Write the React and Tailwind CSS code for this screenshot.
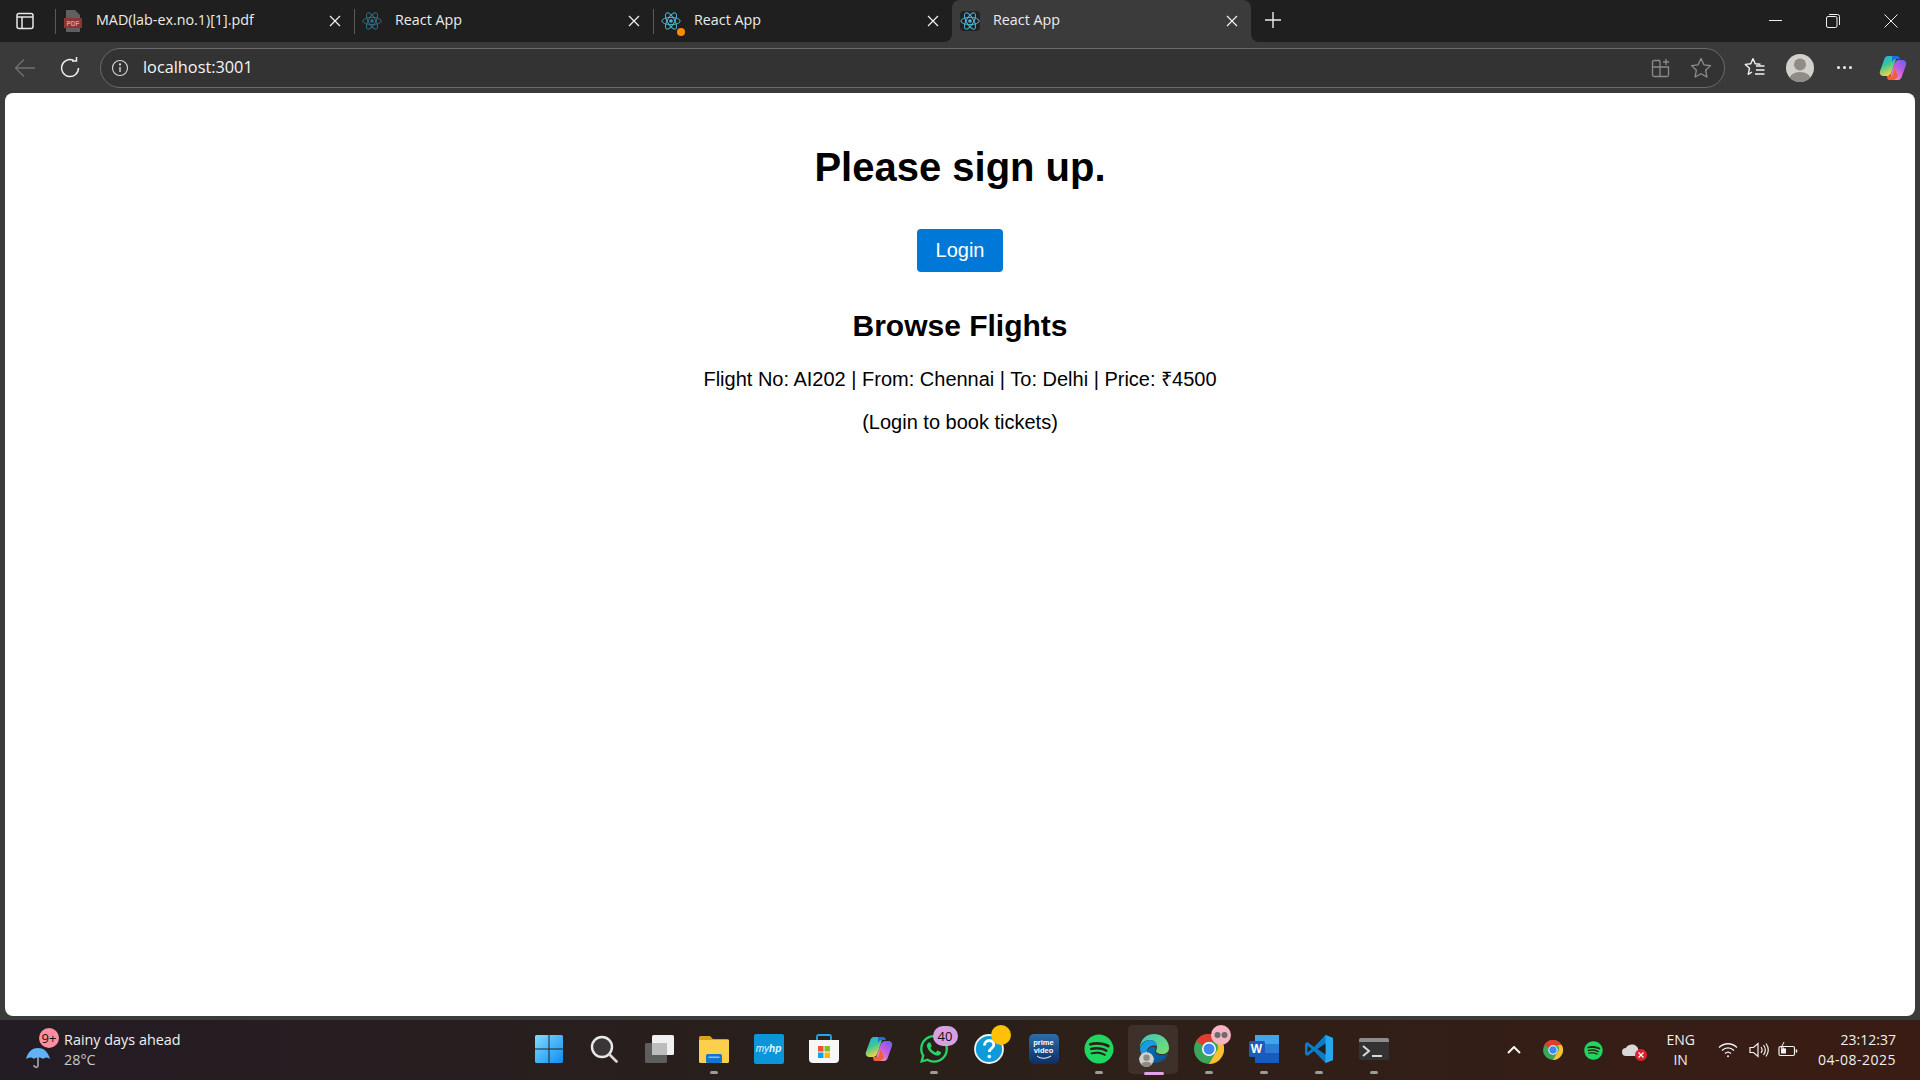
import React from "react";
import { FaWhatsapp, FaSpotify } from "react-icons/fa";

const ui = "font-['Open_Sans','Noto_Sans',sans-serif]";

const ReactLogo = ({ dim }) => (
  <svg width="20" height="20" viewBox="-12 -12 24 24" fill="none" stroke={dim ? "#2f6f80" : "#4fb6d6"} strokeWidth="1.2" className="shrink-0">
    <circle r="2.2" fill={dim ? "#2f6f80" : "#4fb6d6"} stroke="none" />
    <ellipse rx="11" ry="4.4" />
    <ellipse rx="11" ry="4.4" transform="rotate(60)" />
    <ellipse rx="11" ry="4.4" transform="rotate(120)" />
  </svg>
);

const CloseX = () => (
  <svg width="12" height="12" viewBox="0 0 12 12" stroke="#f2f2f2" strokeWidth="1.2" className="shrink-0">
    <path d="M1 1l10 10M11 1L1 11" />
  </svg>
);

const PdfIcon = () => (
  <svg width="20" height="22" viewBox="0 0 20 22" className="shrink-0">
    <path d="M3 0h9l5 5v17H3z" fill="#5f5f5f" />
    <rect x="1" y="8" width="18" height="10" fill="#8e3434" />
    <text x="10" y="15.500" textAnchor="middle" fontSize="6.500" fontFamily="Liberation Sans" fontWeight="700" fill="#d79a9a">PDF</text>
  </svg>
);

function Tab({ icon, title, active, dot, divider }) {
  return (
    <div className={`relative flex h-[42px] w-[299px] shrink-0 items-center ${active ? "rounded-t-lg bg-[#3b3b3b] pl-[8px]" : "pl-[8px]"}`}>
      {divider && <div className="absolute left-0 top-[9px] h-[25px] w-px bg-[#5a5a5a]" />}
      {active && (
        <>
          <div className="absolute bottom-0 left-[-8px] h-[8px] w-[8px] bg-[#3b3b3b]"><div className="h-full w-full rounded-br-lg bg-[#1f1f1f]" /></div>
          <div className="absolute bottom-0 right-[-8px] h-[8px] w-[8px] bg-[#3b3b3b]"><div className="h-full w-full rounded-bl-lg bg-[#1f1f1f]" /></div>
        </>
      )}
      <div className={`relative flex h-[20px] w-[20px] shrink-0 items-center justify-center ${active ? "rounded-sm bg-[#222]" : ""}`}>
        {icon}
        {dot && <span className="absolute bottom-[-5px] right-[-4px] h-[8px] w-[8px] rounded-full bg-[#ff8c00]" />}
      </div>
      <span className={`ml-[13px] flex-1 pb-[3px] text-[14.3px] text-[#ececec] ${ui}`}>{title}</span>
      <span className="mr-[13px]"><CloseX /></span>
    </div>
  );
}

const Collections = ({ c = "#8a8a8a" }) => (
  <svg width="20" height="20" viewBox="0 0 20 20" fill="none" stroke={c} strokeWidth="1.3">
    <path d="M9 2.5H3a1.5 1.5 0 0 0-1.5 1.5v13A1.5 1.5 0 0 0 3 18.5h13a1.5 1.5 0 0 0 1.5-1.5V9H1.5M9 2.5v16" />
    <path d="M15 1v6M12 4h6" />
  </svg>
);

const Star = ({ c = "#8f8f8f" }) => (
  <svg width="22" height="22" viewBox="0 0 22 22" fill="none" stroke={c} strokeWidth="1.3" strokeLinejoin="round">
    <path d="M11 1.5l2.9 6.3 6.6.8-4.9 4.6 1.3 6.8L11 16.7l-5.9 3.3 1.3-6.8L1.500 8.600l6.600-.8z" />
  </svg>
);

const Favs = () => (
  <svg width="22" height="22" viewBox="0 0 22 22" fill="none" stroke="#f2f2f2" strokeWidth="1.4" strokeLinejoin="round">
    <path d="M9 1.5l2.200 5.300 5.300.5M9 1.500L6.800 6.800l-5.500.6 4.200 3.900-1.300 6 3.800-2.300" />
    <path d="M12 9h8.500M12 13h8.500M11 17h9.500" />
  </svg>
);

const CopilotMark = ({ size }) => (
  <svg width={size} height={size} viewBox="0 0 28 28">
    <defs>
      <linearGradient id="cpA" x1="0" y1="0" x2="0.4" y2="1">
        <stop offset="0" stopColor="#2aa8f0" />
        <stop offset="0.5" stopColor="#38c79a" />
        <stop offset="1" stopColor="#f5d33c" />
      </linearGradient>
      <linearGradient id="cpB" x1="1" y1="0" x2="0.2" y2="1">
        <stop offset="0" stopColor="#6a5cf0" />
        <stop offset="0.5" stopColor="#c45ce0" />
        <stop offset="1" stopColor="#f0a0c8" />
      </linearGradient>
    </defs>
    <path d="M9 2h9l-5 15c-1 3-2.500 5-5 5H5c-3 0-5-2-4-5l4-11c.7-2.500 2-4 4-4z" fill="url(#cpA)" />
    <path d="M19 26h-9l5-15c1-3 2.500-5 5-5h3c3 0 5 2 4 5l-4 11c-.7 2.500-2 4-4 4z" fill="url(#cpB)" />
    <path d="M8 22h5l3-8 3 8c-1.500 3-3 4-5 4h-4c-1.500 0-2-2-2-4z" fill="#f0603c" />
    <path d="M13 2h5c1.500 0 2.500 1 3 3h-4c-2 0-3 1-4 3z" fill="#1f6fe0" />
  </svg>
);

const Avatar = ({ size }) => (
  <svg width={size} height={size} viewBox="0 0 28 28">
    <defs><clipPath id={`av${size}`}><circle cx="14" cy="14" r="14" /></clipPath></defs>
    <g clipPath={`url(#av${size})`}>
      <rect width="28" height="28" fill="#d2d0cb" />
      <circle cx="14" cy="10.500" r="6" fill="#8f8b86" />
      <ellipse cx="14" cy="26" rx="11" ry="8" fill="#8f8b86" />
    </g>
  </svg>
);

const Win = () => (
  <svg width="30" height="30" viewBox="0 0 30 30">
    <defs>
      <linearGradient id="wn" x1="0" y1="0" x2="1" y2="1">
        <stop offset="0" stopColor="#7fdcff" />
        <stop offset="1" stopColor="#0f8cf0" />
      </linearGradient>
    </defs>
    <path d="M1 2.500A1.500 1.500 0 0 1 2.500 1H14.500V14.500H1zM15.500 1H27.500A1.500 1.500 0 0 1 29 2.500V14.500H15.500zM1 15.500H14.500V29H2.500A1.500 1.500 0 0 1 1 27.500zM15.500 15.500H29V27.500A1.500 1.500 0 0 1 27.500 29H15.500z" fill="url(#wn)" />
  </svg>
);

const Search = () => (
  <svg width="28" height="28" viewBox="0 0 28 28" fill="none">
    <circle cx="12" cy="12" r="10" fill="#3a3536" stroke="#e8e8e8" strokeWidth="2.400" />
    <path d="M19.500 19.500l7 7" stroke="#d8d8d8" strokeWidth="2.600" strokeLinecap="round" />
  </svg>
);

const TaskView = () => (
  <svg width="30" height="30" viewBox="0 0 30 30">
    <rect x="1" y="9" width="22" height="20" rx="1.500" fill="#5e5e5e" />
    <rect x="8" y="1" width="22" height="20" rx="1.500" fill="#f0f0f0" />
    <rect x="8" y="9" width="15" height="12" fill="#bdbdbd" />
  </svg>
);

const Folder = () => (
  <svg width="30" height="28" viewBox="0 0 30 28">
    <path d="M0 2.500A1.500 1.500 0 0 1 1.500 1H11l3 3h14.500A1.500 1.500 0 0 1 30 5.500V12H0z" fill="#d9a21b" />
    <path d="M0 5h30v21.500a1.500 1.500 0 0 1-1.500 1.500H1.500A1.500 1.500 0 0 1 0 26.500z" fill="#fbd04c" />
    <rect x="7" y="19" width="16" height="9" rx="1.500" fill="#1474d4" />
    <rect x="9.500" y="21.500" width="11" height="1.500" fill="#7cc0f5" />
  </svg>
);

const MyHp = () => (
  <div className="flex h-[30px] w-[30px] items-center justify-center rounded-[2px] bg-[#0a96d8]">
    <span className="font-['Liberation_Sans',sans-serif] text-[10px] italic leading-none text-[#e8f6fd]">my<b>hp</b></span>
  </div>
);

const Store = () => (
  <svg width="30" height="30" viewBox="0 0 30 30">
    <path d="M8 6V2.500A1.500 1.500 0 0 1 9.500 1h11A1.500 1.500 0 0 1 22 2.500V6" fill="none" stroke="#22a6e8" strokeWidth="1.800" />
    <path d="M0 6h30v19a4 4 0 0 1-4 4H4a4 4 0 0 1-4-4z" fill="#f7f7f7" />
    <rect x="9" y="12" width="5.500" height="5.500" fill="#f05030" />
    <rect x="15.500" y="12" width="5.500" height="5.500" fill="#80c020" />
    <rect x="9" y="18.500" width="5.500" height="5.500" fill="#10a0f0" />
    <rect x="15.500" y="18.500" width="5.500" height="5.500" fill="#ffb800" />
  </svg>
);

const Help = () => (
  <svg width="30" height="30" viewBox="0 0 30 30">
    <circle cx="15" cy="15" r="14" fill="#0d9bdc" stroke="#f2f2f2" strokeWidth="1.800" />
    <path d="M10.500 11.500c0-3 2-5 4.700-5s4.600 1.800 4.600 4.200c0 3.600-4.500 3.600-4.500 7.300" fill="none" stroke="#fff" strokeWidth="2.800" />
    <circle cx="15.300" cy="22.500" r="1.800" fill="#fff" />
  </svg>
);

const Prime = () => (
  <div className="flex h-[30px] w-[30px] flex-col items-center justify-center rounded-[5px] bg-gradient-to-b from-[#2e6da8] to-[#0e2e66]">
    <span className="font-['Liberation_Sans',sans-serif] text-[7.500px] font-bold leading-[8px] text-white">prime</span>
    <span className="font-['Liberation_Sans',sans-serif] text-[7.500px] font-bold leading-[8px] text-white">video</span>
    <svg width="16" height="5" viewBox="0 0 16 5" fill="none" stroke="#fff" strokeWidth="1"><path d="M1 1c4 3 9 3 14 0" /></svg>
  </div>
);

const Edge = () => (
  <svg width="30" height="30" viewBox="0 0 30 30">
    <defs>
      <linearGradient id="edA" x1="0" y1="0" x2="1" y2="1">
        <stop offset="0" stopColor="#3bc4c0" />
        <stop offset="1" stopColor="#7be06a" />
      </linearGradient>
      <linearGradient id="edB" x1="0" y1="0" x2="1" y2="1">
        <stop offset="0" stopColor="#0f6cb8" />
        <stop offset="1" stopColor="#0a4f8f" />
      </linearGradient>
    </defs>
    <path d="M1 14C1 6 7 0 15 0c8 0 15 6 15 14 0 4-3 6-7 6-3 0-6-1-6-3 0-1 1-2 1-4 0-4-3-7-7-7C6 6 2 9 1 14z" fill="url(#edA)" />
    <path d="M1 14c2-5 6-8 10-8 4 0 7 3 7 6-2-1-9-1-10 5-1 5 2 10 6 12C7 28 1 22 1 14z" fill="#1a9be0" />
    <path d="M14 29c-4-2-7-6-6-11 .5-3 3-5 6-5 1 0 2 .5 3 1-1 1-1 2-1 3 0 3 4 5 8 4 2 0 4-1 5-2-1 6-7 10-15 10z" fill="url(#edB)" />
  </svg>
);

const Chrome = ({ size = 30 }) => (
  <svg width={size} height={size} viewBox="0 0 30 30">
    <circle cx="15" cy="15" r="15" fill="#3ba55c" />
    <path d="M15 0a15 15 0 0 1 13 7.500H15a7.500 7.500 0 0 0-6.500 3.750L2 7A15 15 0 0 1 15 0z" fill="#e33b2e" />
    <path d="M28 7.500A15 15 0 0 1 15 30l6.500-11.250a7.500 7.500 0 0 0 0-11.250z" fill="#fbc02d" />
    <circle cx="15" cy="15" r="7" fill="#fff" />
    <circle cx="15" cy="15" r="5.500" fill="#3f86f4" />
  </svg>
);

const Word = () => (
  <svg width="30" height="30" viewBox="0 0 30 30">
    <rect x="6" y="1" width="24" height="9" fill="#41a5ee" />
    <rect x="6" y="10" width="24" height="9" fill="#2b7cd3" />
    <rect x="6" y="19" width="24" height="10" fill="#185abd" />
    <rect x="0" y="7" width="16" height="16" rx="1.500" fill="#1b5bbd" />
  </svg>
);

const VsCode = () => (
  <svg width="30" height="30" viewBox="0 0 30 30">
    <path d="M21.500 1L10 13 3.500 8 1 9.500v11L3.500 22 10 17l11.500 12 7.500-3V4z" fill="#0a7cc8" />
    <path d="M21.500 1L29 4v22l-7.500 3z" fill="#25a8ee" />
    <path d="M21.500 9.500L13.500 15l8 5.500z" fill="#241f1a" />
    <path d="M3.500 11.500L7.500 15l-4 3.500z" fill="#241f1a" />
  </svg>
);

const Terminal = () => (
  <div className="relative h-[22px] w-[30px] overflow-hidden rounded-[2px] bg-[#333]">
    <div className="h-[4px] bg-[#8c8c8c]" />
    <svg width="30" height="18" viewBox="0 0 30 18" fill="none" stroke="#d8d8d8" strokeWidth="2">
      <path d="M4 4l6 5-6 5" />
      <path d="M13 14h10" />
    </svg>
  </div>
);

const Badge = ({ className, children }) => (
  <span className={`absolute flex items-center justify-center rounded-full text-[13px] leading-none text-[#111] ${ui} ${className}`}>{children}</span>
);

function Cell({ children, mark, active }) {
  return (
    <div className="relative flex h-[60px] w-[55px] items-center justify-center pb-[2px]">
      {active && <div className="absolute left-[2px] top-[5px] h-[49px] w-[50px] rounded-[5px] bg-[#ffffff14]" />}
      <div className="relative flex items-center justify-center">{children}</div>
      {mark && <div className="absolute bottom-[6px] left-1/2 h-[3px] w-[8px] -translate-x-1/2 rounded-full bg-[#9c9c9c]" />}
      {active && <div className="absolute bottom-[5px] left-1/2 h-[3px] w-[20px] -translate-x-1/2 rounded-full bg-[#e2a4e8]" />}
    </div>
  );
}

export default function App() {
  return (
    <div className="flex h-[1080px] w-[1920px] flex-col overflow-hidden bg-[#3b3b3b]">
      {/* tab strip */}
      <div className="flex h-[42px] shrink-0 items-center bg-[#1f1f1f]">
        <div className="flex w-[55px] shrink-0 justify-center pr-[5px]">
          <svg width="18" height="18" viewBox="0 0 18 18" fill="none" stroke="#e8e8e8" strokeWidth="1.500">
            <rect x="1" y="1.500" width="16" height="15" rx="2" />
            <path d="M1 5h16M6 5v11" />
          </svg>
        </div>
        <Tab divider icon={<PdfIcon />} title="MAD(lab-ex.no.1)[1].pdf" />
        <Tab divider icon={<ReactLogo dim />} title="React App" />
        <Tab divider dot icon={<ReactLogo />} title="React App" />
        <Tab active icon={<ReactLogo />} title="React App" />
        <div className="ml-[14px] flex pb-[3px]">
          <svg width="16" height="16" viewBox="0 0 16 16" stroke="#ededed" strokeWidth="1.400"><path d="M8 0v16M0 8h16" /></svg>
        </div>
        <div className="ml-auto flex items-center">
          <div className="flex w-[58px] justify-center"><div className="mb-[2px] h-px w-[13px] bg-[#f0f0f0]" /></div>
          <div className="flex w-[58px] justify-center">
            <svg width="14" height="14" viewBox="0 0 14 14" fill="none" stroke="#f0f0f0" strokeWidth="1"><rect x=".5" y="2.500" width="10.500" height="11" rx="1.500" /><path d="M3 .5h8.500a2 2 0 0 1 2 2V11" /></svg>
          </div>
          <div className="flex w-[58px] justify-center">
            <svg width="14" height="14" viewBox="0 0 14 14" stroke="#f0f0f0" strokeWidth="1"><path d="M.5.5l13 13M13.500.5l-13 13" /></svg>
          </div>
        </div>
      </div>

      {/* toolbar */}
      <div className="flex h-[51px] shrink-0 items-center bg-[#3a3a3a]">
        <div className="flex w-[50px] shrink-0 justify-center">
          <svg width="22" height="20" viewBox="0 0 22 20" fill="none" stroke="#707070" strokeWidth="1.300"><path d="M21 10H1.500M10 1.500L1.500 10l8.500 8.500" /></svg>
        </div>
        <div className="flex w-[40px] shrink-0 justify-center">
          <svg width="22" height="22" viewBox="0 0 22 22" fill="none" stroke="#efefef" strokeWidth="1.500"><path d="M19.500 11A8.500 8.500 0 1 1 14.500 3.300" /><path d="M14.500 0v4.500h-4.500" transform="translate(3 -.5)" /></svg>
        </div>
        <div className="ml-[10px] flex h-[40px] w-[1625px] shrink-0 items-center rounded-full border border-[#6a6a6a] bg-[#333333] pl-[10px]">
          <svg width="18" height="18" viewBox="0 0 18 18" fill="none" stroke="#d8d8d8" strokeWidth="1.100"><circle cx="9" cy="9" r="7.500" /><path d="M9 8v5" strokeWidth="1.400" /><circle cx="9" cy="5.500" r=".6" fill="#d8d8d8" /></svg>
          <span className={`ml-[14px] flex-1 pb-px text-[16.300px] text-[#f5f5f5] ${ui}`}>localhost:3001</span>
          <Collections />
          <div className="ml-[19px] mr-[12px]"><Star /></div>
        </div>
        <div className="ml-[19px] flex w-[22px] shrink-0 justify-center"><Favs /></div>
        <div className="ml-[20px] flex shrink-0"><Avatar size={28} /></div>
        <div className="ml-[18px] flex w-[24px] shrink-0 justify-center gap-[3px]">
          <span className="h-[3px] w-[3px] rounded-full bg-[#eee]" />
          <span className="h-[3px] w-[3px] rounded-full bg-[#eee]" />
          <span className="h-[3px] w-[3px] rounded-full bg-[#eee]" />
        </div>
        <div className="ml-[23px] flex shrink-0"><CopilotMark size={28} /></div>
      </div>

      {/* page */}
      <div className="mx-[5px] flex h-[923px] shrink-0 flex-col items-center rounded-lg bg-white pt-[51px] font-['Liberation_Sans',Arial,sans-serif] text-black">
        <h1 className="text-[40px] font-bold leading-[46px]">Please sign up.</h1>
        <button className="mt-[39px] h-[43px] w-[86px] rounded-[4px] bg-[#0078d7] pb-[2px] text-[20px] text-white">Login</button>
        <h2 className="mt-[37px] text-[30px] font-bold leading-[34px]">Browse Flights</h2>
        <p className="mt-[25px] text-[20px] leading-[23px]">Flight No: AI202 | From: Chennai | To: Delhi | Price: ₹4500</p>
        <p className="mt-[20px] text-[20px] leading-[23px]">(Login to book tickets)</p>
      </div>

      {/* taskbar */}
      <div className="mt-[4px] grid h-[60px] shrink-0 grid-cols-[1fr_auto_1fr] bg-gradient-to-r from-[#241c24] via-[#2a2019] to-[#3a1c14]">
        <div className="flex items-center pl-[26px]">
          <div className="relative flex w-[38px] shrink-0 pt-[14px]">
            <svg width="24" height="24" viewBox="0 0 24 24">
              <path d="M0 14C2 6 7 3 12 3s10 3 12 11c-3-2-5-2-7 0-2-2-7-2-9 0-2-2-5-2-8 0z" fill="#62b2f5" />
              <path d="M12 12v8c0 3-4 3-4 0" fill="none" stroke="#9a9a9a" strokeWidth="1.800" />
            </svg>
            <Badge className="left-[13px] top-[-3px] h-[20px] w-[20px] bg-[#ff8f9f]">9+</Badge>
          </div>
          <div className={`flex flex-col text-[14.400px] leading-[20px] ${ui}`}>
            <span className="text-[#f0f0f0]">Rainy days ahead</span>
            <span className="text-[#c8c8c8]">28°C</span>
          </div>
        </div>

        <div className="ml-[2px] flex">
          <Cell><Win /></Cell>
          <Cell><Search /></Cell>
          <Cell><TaskView /></Cell>
          <Cell mark><Folder /></Cell>
          <Cell><MyHp /></Cell>
          <Cell><Store /></Cell>
          <Cell><CopilotMark size={28} /></Cell>
          <Cell mark>
            <FaWhatsapp size={32} color="#25d366" />
            <Badge className="right-[-8px] top-[-7px] h-[20px] w-[25px] bg-[#d8a0e4]">40</Badge>
          </Cell>
          <Cell>
            <Help />
            <span className="absolute right-[-7px] top-[-9px] h-[20px] w-[20px] rounded-full bg-[#ffc107]" />
          </Cell>
          <Cell><Prime /></Cell>
          <Cell mark><FaSpotify size={30} color="#1ed760" /></Cell>
          <Cell active>
            <Edge />
            <span className="absolute bottom-[-3px] left-0 flex overflow-hidden rounded-full"><Avatar size={15} /></span>
          </Cell>
          <Cell mark>
            <Chrome />
            <Badge className="right-[-7px] top-[-9px] h-[20px] w-[20px] bg-[#f4b4c4]">
              <svg width="14" height="8" viewBox="0 0 14 8" fill="#6b6b6b"><circle cx="3.500" cy="4" r="3" /><circle cx="10.500" cy="4" r="3" /></svg>
            </Badge>
          </Cell>
          <Cell mark>
            <Word />
            <span className="absolute left-0 top-[7px] flex h-[16px] w-[16px] items-center justify-center font-['Liberation_Sans',sans-serif] text-[12px] font-bold text-white">W</span>
          </Cell>
          <Cell mark><VsCode /></Cell>
          <Cell mark><Terminal /></Cell>
        </div>

        <div className={`flex items-center justify-end pr-[24px] text-[14px] leading-[20px] text-[#f0f0f0] ${ui}`}>
          <svg width="14" height="8" viewBox="0 0 14 8" fill="none" stroke="#f4f4f4" strokeWidth="2" className="mr-[22px]"><path d="M1 7l6-6 6 6" /></svg>
          <div className="mr-[21px] flex"><Chrome size={20} /></div>
          <div className="mr-[19px] flex"><FaSpotify size={19} color="#1ed760" /></div>
          <div className="relative mr-[26px] flex">
            <svg width="18" height="12" viewBox="0 0 18 12"><path d="M4 12a4 4 0 0 1 0-8c1-3 7-5 10-2 3 1 4 10 0 10z" fill="#d8d8d8" /></svg>
            <span className="absolute bottom-[-5px] right-[-7px] flex h-[12px] w-[12px] items-center justify-center rounded-full bg-[#d8232e]">
              <svg width="6" height="6" viewBox="0 0 6 6" stroke="#fff" strokeWidth="1.200"><path d="M.5.5l5 5M5.500.5l-5 5" /></svg>
            </span>
          </div>
          <div className="mr-[23px] flex flex-col items-center"><span>ENG</span><span>IN</span></div>
          <svg width="20" height="16" viewBox="0 0 20 16" fill="none" stroke="#f2f2f2" strokeWidth="1.300" className="mr-[11px]">
            <path d="M1 5.500c5-5 13-5 18 0M4 8.500c3.500-3.500 8.500-3.500 12 0M7 11.500c2-1.800 4-1.800 6 0" />
            <circle cx="10" cy="14.300" r="1" fill="#f2f2f2" stroke="none" />
          </svg>
          <svg width="20" height="16" viewBox="0 0 20 16" fill="none" stroke="#f2f2f2" strokeWidth="1.200" className="mr-[9px]">
            <path d="M1 5.500h3.500L9 1.500v13l-4.500-4H1zM12 5c1.300 1.800 1.300 4.200 0 6M14.500 3c2.200 3 2.200 7 0 10M17 1.500c2.800 4 2.800 9 0 13" />
          </svg>
          <svg width="20" height="16" viewBox="0 0 20 16" fill="none" stroke="#f2f2f2" strokeWidth="1.200" className="mr-[20px]">
            <rect x="1" y="4.500" width="15.500" height="9" rx="1.500" />
            <path d="M18.500 7.500v3" strokeWidth="1.500" />
            <rect x="3" y="6.500" width="5" height="5" fill="#f2f2f2" stroke="none" />
            <path d="M6 0L3 6h3l-2 4" strokeWidth="1" />
          </svg>
          <div className="flex flex-col items-end"><span>23:12:37</span><span className="tracking-[0.5px]">04-08-2025</span></div>
        </div>
      </div>
    </div>
  );
}
